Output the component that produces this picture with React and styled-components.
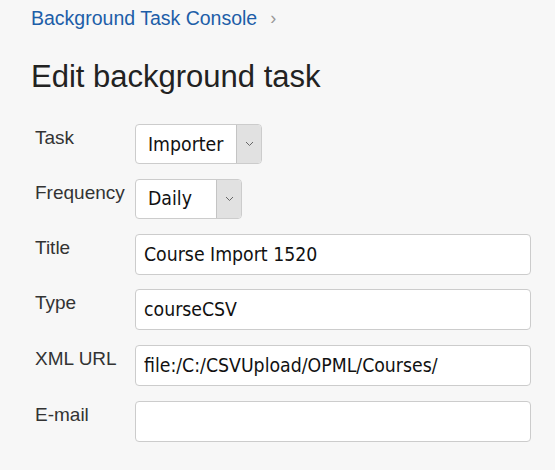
import React from 'react';
import styled, { createGlobalStyle } from 'styled-components';

const GlobalStyle = createGlobalStyle`
  html, body {
    margin: 0;
    padding: 0;
    background: #f7f7f7;
  }
  * {
    box-sizing: border-box;
  }
`;

const fields = [
  { label: 'Title', value: 'Course Import 1520' },
  { label: 'Type', value: 'courseCSV' },
  { label: 'XML URL', value: 'file:/C:/CSVUpload/OPML/Courses/' },
  { label: 'E-mail', value: '' },
];

const Page = styled.main`
  padding: 6px 24px 20px 31px;
  font-family: 'Liberation Sans', Arial, sans-serif;
  color: #333;
`;

const Breadcrumb = styled.nav`
  display: flex;
  align-items: center;
  gap: 13px;
  font-size: 19.5px;
  line-height: 24px;

  a {
    color: #1d5ea8;
    text-decoration: none;
  }

  span {
    color: #999;
    font-size: 18px;
  }
`;

const Title = styled.h1`
  margin: 29px 0 29px;
  font-size: 31px;
  font-weight: 400;
  line-height: 36px;
  color: #222;
`;

const Form = styled.form`
  display: grid;
  grid-template-columns: 100px 396px;
  row-gap: 14.8px;
  padding-left: 4px;
`;

const Label = styled.label`
  font-size: 19px;
  line-height: 22px;
  padding-top: 3px;
  color: #333;
`;

const Field = styled.div`
  height: ${(p) => p.$h || 40}px;
`;

const Input = styled.input`
  width: 100%;
  height: 100%;
  border: 1px solid #ccc;
  border-radius: 4px;
  background: #fff;
  padding: 0 8px;
  font-family: 'DejaVu Sans Condensed', 'DejaVu Sans', sans-serif;
  font-size: 19.3px;
  color: #111;
  outline: none;
`;

const Select = styled.div`
  display: inline-flex;
  height: 100%;
  width: ${(p) => p.$w}px;
  border: 1px solid #ccc;
  border-radius: 4px;
  background: #fff;
  overflow: hidden;
`;

const SelectValue = styled.div`
  flex: 1;
  display: flex;
  align-items: center;
  padding-left: 12px;
  font-family: 'DejaVu Sans Condensed', 'DejaVu Sans', sans-serif;
  font-size: 19.3px;
  color: #111;
`;

const SelectButton = styled.div`
  width: 25px;
  display: flex;
  align-items: center;
  justify-content: center;
  background: #e1e1e1;
  border-left: 1px solid #c4c4c4;
`;

const Chevron = () => (
  <svg width="9" height="6" viewBox="0 0 9 6" fill="none">
    <path d="M1 1l3.5 3.5L8 1" stroke="#666" strokeWidth="1" />
  </svg>
);

const Dropdown = ({ value, width }) => (
  <Select $w={width}>
    <SelectValue>{value}</SelectValue>
    <SelectButton>
      <Chevron />
    </SelectButton>
  </Select>
);

export default function App() {
  return (
    <>
      <GlobalStyle />
      <Page>
        <Breadcrumb>
          <a href="#">Background Task Console</a>
          <span>›</span>
        </Breadcrumb>
        <Title>Edit background task</Title>
        <Form>
          <Label>Task</Label>
          <Field>
            <Dropdown value="Importer" width={127} />
          </Field>
          <Label>Frequency</Label>
          <Field>
            <Dropdown value="Daily" width={107} />
          </Field>
          {fields.map((f) => (
            <React.Fragment key={f.label}>
              <Label>{f.label}</Label>
              <Field $h={41}>
                <Input defaultValue={f.value} />
              </Field>
            </React.Fragment>
          ))}
        </Form>
      </Page>
    </>
  );
}
